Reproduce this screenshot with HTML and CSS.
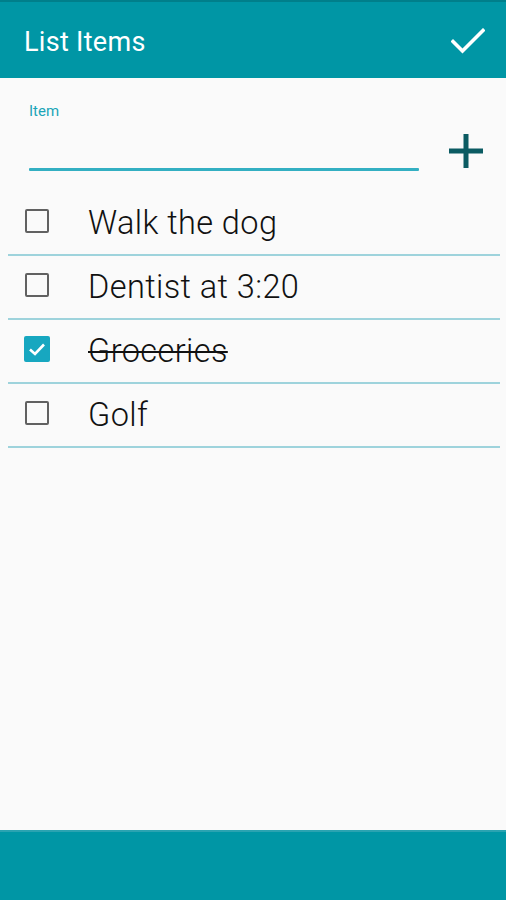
FILE: index.html
```html
<!DOCTYPE html>
<html lang="en">
<head>
<meta charset="utf-8">
<title>List Items</title>
<link rel="stylesheet" href="styles.css">
</head>
<body>
<div class="screen">
  <header class="toolbar">
    <h1 class="title">List Items</h1>
    <svg class="done" viewBox="0 0 34 26" width="34" height="26" aria-label="Done">
      <path d="M2 13.5 L11.5 23 L32 2.5" fill="none" stroke="#ffffff" stroke-width="3.6" stroke-linecap="square"/>
    </svg>
  </header>
  <main class="content">
    <div class="entry">
      <label class="field">
        <span class="field-label">Item</span>
        <span class="field-line"></span>
      </label>
      <svg class="add" viewBox="0 0 36 36" width="36" height="36" aria-label="Add">
        <path d="M18 1 V35 M1 18 H35" stroke="#0b5b62" stroke-width="5" fill="none"/>
      </svg>
    </div>
    <ul class="items">
      <li class="item"><span class="box"></span><span class="text">Walk the dog</span></li>
      <li class="item"><span class="box"></span><span class="text">Dentist at 3:20</span></li>
      <li class="item done-item"><span class="box checked"><svg viewBox="0 0 24 24" width="24" height="24"><path d="M5 12.5 L10 17 L19 7.5" fill="none" stroke="#fff" stroke-width="2.6"/></svg></span><span class="text">Groceries</span></li>
      <li class="item"><span class="box"></span><span class="text">Golf</span></li>
    </ul>
  </main>
  <footer class="navbar"></footer>
</div>
</body>
</html>
```
FILE: styles.css
```css
* { box-sizing: border-box; }
html, body { margin: 0; padding: 0; }
body {
  background: #fafafa;
  font-family: Roboto, "Noto Sans", "Liberation Sans", sans-serif;
}
.screen {
  width: 506px;
  height: 900px;
  display: flex;
  flex-direction: column;
}
.toolbar {
  height: 78px;
  flex: none;
  background: #0096a5;
  border-top: 2px solid #007f8b;
  display: flex;
  align-items: center;
  justify-content: space-between;
  padding: 0 21px 0 24px;
}
.title {
  margin: 3px 0 0;
  color: #ffffff;
  font-size: 27px;
  font-weight: 400;
  letter-spacing: 0.3px;
}
.done { display: block; margin-top: 1px; }
.content {
  flex: 1;
  padding: 0 6px 0 8px;
}
.entry {
  display: flex;
  align-items: flex-end;
  padding: 23px 16px 0 21px;
  gap: 29px;
}
.field {
  flex: 1;
  display: flex;
  flex-direction: column;
}
.field-label {
  color: #1aa5b8;
  font-size: 15px;
  line-height: 20px;
}
.field-line {
  height: 3px;
  margin-top: 47px;
  background: #33afc2;
  border-radius: 1px;
}
.add { display: block; margin-bottom: 2px; }
.items {
  list-style: none;
  margin: 21px 0 0;
  padding: 0;
}
.item {
  height: 64px;
  border-bottom: 2px solid #9ed3dc;
  display: flex;
  align-items: center;
  padding-left: 17px;
  gap: 39px;
}
.box {
  width: 24px;
  height: 24px;
  border: 2.5px solid #616161;
  border-radius: 2px;
  flex: none;
  margin-top: -4px;
  display: flex;
  align-items: center;
  justify-content: center;
}
.box.checked {
  background: #17a7c0;
  border-color: #17a7c0;
  width: 26px;
  height: 26px;
  margin-left: -1px;
  margin-right: -1px;
}
.box.checked svg { display: block; flex: none; }
.text {
  font-size: 32.5px;
  font-weight: 300;
  color: #111111;
  letter-spacing: 0.4px;
  margin-top: -1px;
}
.done-item .text {
  text-decoration: line-through;
  text-decoration-thickness: 2px;
}
.navbar {
  height: 70px;
  flex: none;
  background: #0096a5;
  border-top: 2px solid #2aa3b1;
}
```
